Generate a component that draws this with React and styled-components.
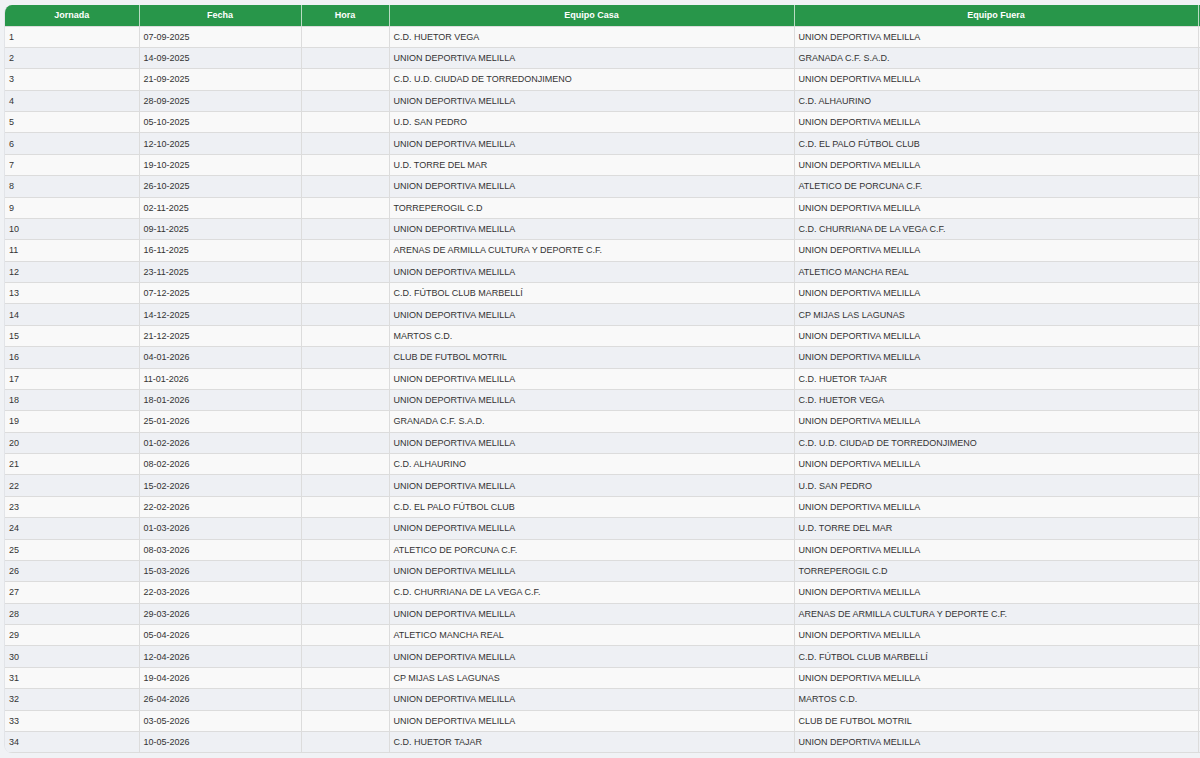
import React from 'react'
import styled, {createGlobalStyle} from 'styled-components'

const GlobalStyle = createGlobalStyle`
  html, body {
    margin: 0;
    padding: 0;
    overflow: hidden;
    background: #f0f2f5;
    font-family: "Liberation Sans", Arial, sans-serif;
  }
`

const Page = styled.div`
  padding: 5px 0 0 4px;
`

// the table keeps going past the right edge, so only the left corners are round
const TableWrap = styled.div`
  width: 1196px;
  border-radius: 8px 0 0 8px;
  overflow: hidden;
  border-left: 1px solid #e2e4e8;
`

const Table = styled.table`
  width: 100%;
  border-collapse: collapse;
  table-layout: fixed;
  font-size: 9px;
  color: #333;
`

const HeadCell = styled.th`
  background: #28964a;
  color: #fff;
  font-weight: bold;
  text-align: center;
  padding: 0 4px;
  border-right: 1px solid #b9dcc3;
  border-bottom: 1px solid #dcdcdc;
`

const HeadRow = styled.tr`
  height: 21px;
`

const Row = styled.tr`
  height: 21.38px;
  background: ${(p) => (p.$even ? '#eef0f4' : '#f9f9f9')};
`

const Cell = styled.td`
  padding: 0 4px;
  text-align: left;
  white-space: nowrap;
  overflow: hidden;
  border-right: 1px solid #dcdcdc;
  border-bottom: 1px solid #dcdcdc;
`

const UDM = 'UNION DEPORTIVA MELILLA'

const rivals = [
  'C.D. HUETOR VEGA',
  'GRANADA C.F. S.A.D.',
  'C.D. U.D. CIUDAD DE TORREDONJIMENO',
  'C.D. ALHAURINO',
  'U.D. SAN PEDRO',
  'C.D. EL PALO FÚTBOL CLUB',
  'U.D. TORRE DEL MAR',
  'ATLETICO DE PORCUNA C.F.',
  'TORREPEROGIL C.D',
  'C.D. CHURRIANA DE LA VEGA C.F.',
  'ARENAS DE ARMILLA CULTURA Y DEPORTE C.F.',
  'ATLETICO MANCHA REAL',
  'C.D. FÚTBOL CLUB MARBELLÍ',
  'CP MIJAS LAS LAGUNAS',
  'MARTOS C.D.',
  'CLUB DE FUTBOL MOTRIL',
  'C.D. HUETOR TAJAR',
]

// true = melilla plays at home (first half), second half is the reverse
const homeFirstHalf = [
  false, true, false, true, false, true, false, true, false,
  true, false, true, false, true, false, false, true,
]

const dates = [
  '07-09-2025', '14-09-2025', '21-09-2025', '28-09-2025', '05-10-2025',
  '12-10-2025', '19-10-2025', '26-10-2025', '02-11-2025', '09-11-2025',
  '16-11-2025', '23-11-2025', '07-12-2025', '14-12-2025', '21-12-2025',
  '04-01-2026', '11-01-2026', '18-01-2026', '25-01-2026', '01-02-2026',
  '08-02-2026', '15-02-2026', '22-02-2026', '01-03-2026', '08-03-2026',
  '15-03-2026', '22-03-2026', '29-03-2026', '05-04-2026', '12-04-2026',
  '19-04-2026', '26-04-2026', '03-05-2026', '10-05-2026',
]

const matches = dates.map((fecha, i) => {
  const k = i % 17
  const rival = rivals[k]
  const udmHome = i < 17 ? homeFirstHalf[k] : !homeFirstHalf[k]
  return {
    jornada: i + 1,
    fecha,
    hora: '',
    home: udmHome ? UDM : rival,
    away: udmHome ? rival : UDM,
  }
})

const App = () => (
  <Page>
    <GlobalStyle />
    <TableWrap>
      <Table>
        <colgroup>
          <col style={{width: 134}} />
          <col style={{width: 162}} />
          <col style={{width: 88}} />
          <col style={{width: 405}} />
          <col style={{width: 404}} />
          <col />
        </colgroup>
        <thead>
          <HeadRow>
            <HeadCell>Jornada</HeadCell>
            <HeadCell>Fecha</HeadCell>
            <HeadCell>Hora</HeadCell>
            <HeadCell>Equipo Casa</HeadCell>
            <HeadCell>Equipo Fuera</HeadCell>
            <HeadCell />
          </HeadRow>
        </thead>
        <tbody>
          {matches.map((m, idx) => (
            <Row key={m.jornada} $even={idx % 2 === 1}>
              <Cell>{m.jornada}</Cell>
              <Cell>{m.fecha}</Cell>
              <Cell>{m.hora}</Cell>
              <Cell>{m.home}</Cell>
              <Cell>{m.away}</Cell>
              <Cell />
            </Row>
          ))}
        </tbody>
      </Table>
    </TableWrap>
  </Page>
)

export default App
